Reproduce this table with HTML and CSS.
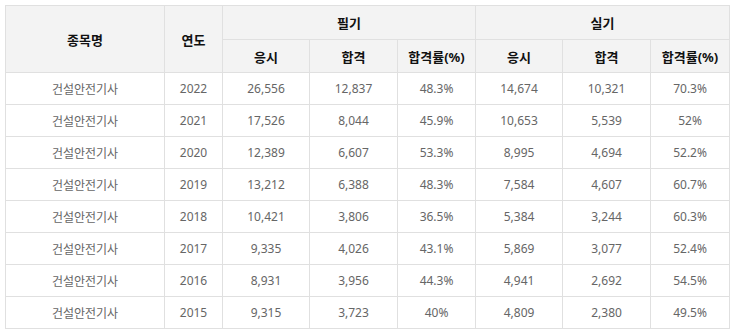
FILE: index.html
```html
<!DOCTYPE html>
<html lang="ko">
<head>
  <meta charset="UTF-8" />
  <meta name="viewport" content="width=device-width, initial-scale=1.0"/>
  <title>건설안전기사 합격률</title>
  <link rel="stylesheet" href="styles.css">
</head>
<body>
  <div class="wrap">
    <table class="stats">
      <colgroup>
        <col class="c-name">
        <col class="c-year">
        <col class="c-a">
        <col class="c-b">
        <col class="c-c">
        <col class="c-a">
        <col class="c-b">
        <col class="c-c">
      </colgroup>
      <thead>
        <tr class="head-top">
          <th rowspan="2">종목명</th>
          <th rowspan="2">연도</th>
          <th colspan="3">필기</th>
          <th colspan="3">실기</th>
        </tr>
        <tr class="head-sub">
          <th>응시</th>
          <th>합격</th>
          <th>합격률(%)</th>
          <th>응시</th>
          <th>합격</th>
          <th>합격률(%)</th>
        </tr>
      </thead>
      <tbody>
        <tr><td>건설안전기사</td><td>2022</td><td>26,556</td><td>12,837</td><td>48.3%</td><td>14,674</td><td>10,321</td><td>70.3%</td></tr>
        <tr><td>건설안전기사</td><td>2021</td><td>17,526</td><td>8,044</td><td>45.9%</td><td>10,653</td><td>5,539</td><td>52%</td></tr>
        <tr><td>건설안전기사</td><td>2020</td><td>12,389</td><td>6,607</td><td>53.3%</td><td>8,995</td><td>4,694</td><td>52.2%</td></tr>
        <tr><td>건설안전기사</td><td>2019</td><td>13,212</td><td>6,388</td><td>48.3%</td><td>7,584</td><td>4,607</td><td>60.7%</td></tr>
        <tr><td>건설안전기사</td><td>2018</td><td>10,421</td><td>3,806</td><td>36.5%</td><td>5,384</td><td>3,244</td><td>60.3%</td></tr>
        <tr><td>건설안전기사</td><td>2017</td><td>9,335</td><td>4,026</td><td>43.1%</td><td>5,869</td><td>3,077</td><td>52.4%</td></tr>
        <tr><td>건설안전기사</td><td>2016</td><td>8,931</td><td>3,956</td><td>44.3%</td><td>4,941</td><td>2,692</td><td>54.5%</td></tr>
        <tr><td>건설안전기사</td><td>2015</td><td>9,315</td><td>3,723</td><td>40%</td><td>4,809</td><td>2,380</td><td>49.5%</td></tr>
      </tbody>
    </table>
  </div>
</body>
</html>
```

FILE: styles.css
```css
* { box-sizing: border-box; margin: 0; padding: 0; }
body {
  font-family: "Noto Sans", "Noto Sans CJK KR", sans-serif;
  background: #fff;
  color: #666;
}

.wrap {
  padding: 5px 0 0 5px;
}

.stats {
  width: 725px;
  table-layout: fixed;
  border-collapse: collapse;
  font-size: 12px;
}
.c-name { width: 159px; }
.c-year { width: 58px; }
.c-a { width: 87px; }
.c-b { width: 88px; }
.c-c { width: 78px; }
.stats col:last-child { width: 79px; }

.stats th, .stats td {
  border: 1px solid #e0e0e0;
  text-align: center;
  vertical-align: middle;
  padding: 0;
}
.stats th {
  background: #f3f3f3;
  color: #111;
  font-size: 13px;
  font-weight: bold;
}
.head-top th { height: 34px; }
.head-sub th { height: 33px; }
.stats td {
  height: 32px;
  color: #666;
}
```
